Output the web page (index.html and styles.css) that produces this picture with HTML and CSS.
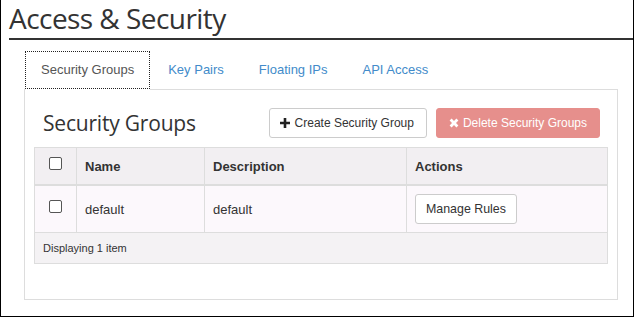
FILE: index.html
```html
<!DOCTYPE html>
<html>
<head>
<meta charset="utf-8">
<link rel="stylesheet" href="styles.css">
</head>
<body>
<div class="frame">
  <h1 class="title">Access &amp; Security</h1>
  <div class="tabs-area">
    <ul class="tabs">
      <li class="tab active"><a>Security Groups</a></li>
      <li class="tab"><a>Key Pairs</a></li>
      <li class="tab"><a>Floating IPs</a></li>
      <li class="tab"><a>API Access</a></li>
    </ul>
    <div class="panel">
      <div class="panel-head">
        <h3 class="subtitle">Security Groups</h3>
        <div class="actions">
          <button class="btn btn-create"><svg class="ico" viewBox="0 0 10 10" width="10" height="10"><path d="M3.7 0h2.6v3.7H10v2.6H6.3V10H3.7V6.3H0V3.7h3.7z" fill="#222"/></svg>Create Security Group</button>
          <button class="btn btn-danger"><svg class="ico" viewBox="0 0 10 10" width="10" height="10"><path d="M0.6 2.6L2.6 0.6 5 3 7.4 0.6 9.4 2.6 7 5 9.4 7.4 7.4 9.4 5 7 2.6 9.4 0.6 7.4 3 5z" fill="#fff"/></svg>Delete Security Groups</button>
        </div>
      </div>
      <table class="grid">
        <colgroup>
          <col class="w-check">
          <col class="w-name">
          <col class="w-desc">
          <col class="w-act">
        </colgroup>
        <thead>
          <tr>
            <th class="c-check"><span class="box"></span></th>
            <th>Name</th>
            <th>Description</th>
            <th>Actions</th>
          </tr>
        </thead>
        <tbody>
          <tr class="row">
            <td class="c-check"><span class="box"></span></td>
            <td>default</td>
            <td>default</td>
            <td><button class="btn btn-sm">Manage Rules</button></td>
          </tr>
        </tbody>
        <tfoot>
          <tr>
            <td colspan="4" class="foot">Displaying 1 item</td>
          </tr>
        </tfoot>
      </table>
    </div>
  </div>
</div>
</body>
</html>
```
FILE: styles.css
```css
html, body {
  margin: 0;
  padding: 0;
  background: #fff;
}
.frame {
  box-sizing: border-box;
  width: 634px;
  height: 317px;
  border-left: 1px solid #000;
  border-right: 1px solid #000;
  border-bottom: 1px solid #000;
  padding-left: 8px;
  font-family: "Liberation Sans", Arial, sans-serif;
  font-size: 13px;
  color: #333;
}
.title {
  margin: 0;
  height: 38px;
  border-bottom: 2px solid #333;
  font-family: "Open Sans", "Noto Sans", sans-serif;
  font-weight: 400;
  font-size: 28px;
  line-height: 36px;
  color: #333;
  letter-spacing: -0.55px;
}
.tabs-area {
  margin: 11px 15px 0 15px;
}
.tabs {
  list-style: none;
  margin: 0;
  padding: 0 0 0 1px;
  display: flex;
  border-bottom: 1px solid #ddd;
}
.tab {
  margin-right: 2px;
}
.tab + .tab + .tab {
  margin-left: 1px;
}
.tab a {
  display: block;
  box-sizing: border-box;
  height: 38px;
  padding: 10px 15px;
  line-height: 16px;
  border: 1px solid transparent;
  color: #428bca;
}
.tab.active a {
  color: #555;
  background: #fff;
  border: 1px dotted #222;
  box-shadow: 0 1px 0 #fff;
}
.panel {
  border: 1px solid #ddd;
  border-top: 0;
  padding: 18px 10px 35px 9px;
}
.panel-head {
  display: flex;
  justify-content: space-between;
  align-items: center;
  height: 30px;
  margin-bottom: 9px;
}
.subtitle {
  margin: 0 0 0 9px;
  font-family: "Open Sans", "Noto Sans", sans-serif;
  font-weight: 400;
  font-size: 21px;
  color: #333;
  letter-spacing: -0.2px;
}
.actions {
  display: flex;
  gap: 9px;
  margin-right: 7px;
}
.btn {
  box-sizing: border-box;
  height: 30px;
  padding: 0 12px;
  display: inline-flex;
  align-items: center;
  gap: 4px;
  border: 1px solid #ccc;
  border-radius: 3px;
  background: #fff;
  font-family: "Liberation Sans", Arial, sans-serif;
  font-size: 12px;
  color: #333;
}
.btn-create {
  padding: 0 12px 0 10px;
  gap: 5px;
}
.btn-danger {
  background: #e68f8c;
  border-color: #e68f8c;
  color: #fff;
}
.ico {
  display: block;
}
.grid {
  width: 573px;
  border-collapse: collapse;
  table-layout: fixed;
}
.w-check { width: 42px; }
.w-name { width: 128px; }
.w-desc { width: 202px; }
.w-act { width: 201px; }
.grid th, .grid td {
  border: 1px solid #ddd;
  padding: 0 8px;
  text-align: left;
}
.grid thead th {
  height: 36px;
  background: #f2eff2;
  font-weight: bold;
  border-bottom: 2px solid #ddd;
}
.grid .c-check {
  text-align: center;
  padding: 0;
}
.box {
  display: inline-block;
  box-sizing: border-box;
  width: 13px;
  height: 13px;
  border: 1px solid #555;
  border-radius: 2px;
  background: #fff;
  vertical-align: middle;
  margin-top: -7px;
}
.row td {
  background: #fcf8fc;
  height: 46px;
}
.row .c-check .box { margin-top: -8px; }
.btn-sm {
  padding: 0 10px;
  font-size: 12.4px;
}
.grid .foot {
  height: 30px;
  background: #f4f2f4;
  font-size: 11px;
}
```
